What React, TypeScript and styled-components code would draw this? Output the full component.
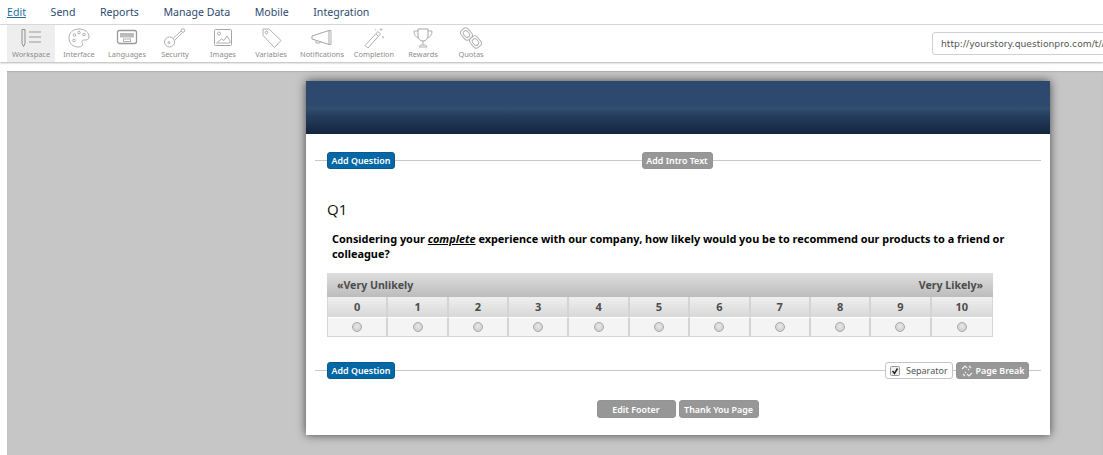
import React from 'react';
import styled, { createGlobalStyle } from 'styled-components';

const GlobalStyle = createGlobalStyle`
  html, body {
    margin: 0;
    height: 100%;
    overflow: hidden;
    background: #fff;
  }
`;

const NavBar = styled.nav`
  display: flex;
  align-items: center;
  gap: 24.6px;
  height: 23px;
  padding: 0 0 1px 7px;
  border-bottom: 1px solid #dcdcdc;
  font-family: 'Noto Sans', sans-serif;
  font-size: 10.6px;
  color: #2d4a70;
`;

const NavLink = styled.span<{ $active?: boolean }>`
  color: ${(p) => (p.$active ? '#1d6f9f' : '#2d4a70')};
  text-decoration: ${(p) => (p.$active ? 'underline' : 'none')};
`;

const Toolbar = styled.div`
  display: flex;
  justify-content: space-between;
  align-items: center;
  height: 37px;
  padding-left: 7px;
  box-shadow: 0 1px 2px rgba(0, 0, 0, 0.3);
`;

const Tools = styled.div`
  display: flex;
  height: 100%;
`;

const Tool = styled.div<{ $active?: boolean; $width?: number }>`
  display: flex;
  flex-direction: column;
  align-items: center;
  width: ${(p) => p.$width ?? 48}px;
  height: 100%;
  padding-top: 2px;
  box-sizing: border-box;
  background: ${(p) => (p.$active ? '#eeeeee' : 'transparent')};
  font-family: 'Noto Sans', sans-serif;
  font-size: 7.4px;
  line-height: 10px;
  color: #8d8d8d;
  white-space: nowrap;
`;

const Icon = styled.svg`
  width: 24px;
  height: 22px;
  fill: none;
  stroke: #b0b0b0;
  stroke-width: 1;
`;

const UrlField = styled.div`
  flex: none;
  width: 190px;
  margin-right: -19px;
  height: 23px;
  box-sizing: border-box;
  padding-left: 8px;
  border: 1px solid #cfcfcf;
  border-radius: 3px;
  font-family: 'DejaVu Sans', sans-serif;
  font-size: 9.2px;
  line-height: 21px;
  color: #555;
  white-space: nowrap;
  overflow: hidden;
`;

const Canvas = styled.main`
  margin: 9px 0 0 7px;
  padding: 10px 53px 20px 299px;
  background: #c6c6c6;
  box-shadow: inset 0 1px 1px rgba(0, 0, 0, 0.12);
`;

const Card = styled.section`
  width: 744px;
  background: #fff;
  box-shadow: 0 0 9px rgba(0, 0, 0, 0.65);
  font-family: 'Noto Sans', sans-serif;
`;

const Banner = styled.div`
  height: 53px;
  background: linear-gradient(
    #2c486c 0,
    #2e4a6e 49%,
    #31506f 50%,
    #253e5e 65%,
    #14253f 100%
  );
`;

const Body = styled.div`
  padding: 18px 9px 17px;
`;

const ActionRow = styled.div<{ $top?: number }>`
  display: flex;
  justify-content: space-between;
  align-items: center;
  height: 17px;
  margin-top: ${(p) => p.$top ?? 0}px;
  padding: 0 12px;
  background: linear-gradient(#c8c8c8, #c8c8c8) center / 100% 1px no-repeat;
`;

const CenterSlot = styled.div`
  flex: 1;
  display: flex;
  justify-content: center;
  padding-right: 70px;
`;

const Button = styled.button<{ $tone?: 'blue' | 'gray'; $width: number; $height?: number }>`
  flex: none;
  display: inline-flex;
  justify-content: center;
  align-items: center;
  gap: 3px;
  width: ${(p) => p.$width}px;
  height: ${(p) => p.$height ?? 17}px;
  padding: 0;
  border: 1px solid ${(p) => (p.$tone === 'blue' ? '#0a5a8e' : '#949494')};
  border-radius: 3px;
  background: ${(p) => (p.$tone === 'blue' ? '#0568a6' : '#979797')};
  color: #fff;
  font-family: 'Noto Sans', sans-serif;
  font-size: 8.9px;
  font-weight: 600;
  white-space: nowrap;
`;

const RightGroup = styled.div`
  display: flex;
  gap: 3px;
`;

const SeparatorBox = styled.label`
  display: inline-flex;
  align-items: center;
  gap: 6px;
  width: 68px;
  height: 17px;
  box-sizing: border-box;
  padding-left: 4px;
  background: #fff;
  border: 1px solid #c4c4c4;
  border-radius: 3px;
  font-family: 'Noto Sans', sans-serif;
  font-size: 9px;
  color: #555;
`;

const Tick = styled.svg`
  width: 10px;
  height: 10px;
`;

const QuestionNumber = styled.h2`
  margin: 29px 0 0 12px;
  font-family: 'Open Sans', sans-serif;
  font-size: 15px;
  line-height: 22px;
  font-weight: 500;
  color: #111;
`;

const QuestionText = styled.p`
  margin: 11px 0 0 17px;
  width: 690px;
  font-size: 10.9px;
  line-height: 15px;
  font-weight: 700;
  color: #000;
`;

const Emphasis = styled.em`
  text-decoration: underline;
`;

const Scale = styled.div`
  width: 666px;
  margin: 12px 0 0 12px;
`;

const ScaleHeader = styled.div`
  display: flex;
  justify-content: space-between;
  align-items: center;
  height: 24px;
  padding: 0 10px;
  background: linear-gradient(#dedede, #bcbcbc);
  font-family: 'Noto Sans', sans-serif;
  font-size: 10.6px;
  font-weight: 700;
  color: #4c4c4c;
`;

const ScaleGrid = styled.div`
  display: grid;
  grid-template-columns: repeat(11, 1fr);
  border: 1px solid #d6d6d6;
  border-top: 0;
`;

const NumberCell = styled.div`
  height: 20px;
  background: linear-gradient(#efefef, #d8d8d8);
  border-right: 2px solid #d4d4d4;
  border-bottom: 1px solid #fff;
  font-size: 11px;
  font-weight: 700;
  line-height: 20px;
  text-align: center;
  color: #4c4c4c;

  &:nth-child(11) {
    border-right: 0;
  }
`;

const RadioCell = styled.div`
  display: flex;
  justify-content: center;
  align-items: center;
  height: 18px;
  background: #f4f4f4;
  border-right: 2px solid #d4d4d4;

  &:last-child {
    border-right: 0;
  }
`;

const Radio = styled.span`
  width: 8px;
  height: 8px;
  border: 1px solid #a8a8a8;
  border-radius: 50%;
  background: radial-gradient(circle at 50% 40%, #e8e8e8, #c8c8c8);
`;

const FooterRow = styled.div`
  display: flex;
  justify-content: center;
  gap: 3px;
  margin-top: 21px;
  padding-right: 1px;
`;

const navItems = ['Send', 'Reports', 'Manage Data', 'Mobile', 'Integration'];
const scalePoints = [0, 1, 2, 3, 4, 5, 6, 7, 8, 9, 10];

const toolIcons: Record<string, React.ReactNode> = {
  Workspace: (
    <>
      <path d="M3 2.500h3v14l-1.500 3-1.500-3z" stroke="#8f8f8f" />
      <path d="M10 5h12M10 10h12M10 15h12" stroke="#999" />
    </>
  ),
  Interface: (
    <>
      <path d="M12 2c6 0 10 3.500 10 8 0 3-3 3-5 3-2.500 0-2 2-1.500 3.500.5 2-1 3.500-4 3.500-5.500 0-9.500-3.500-9.500-9S6 2 12 2z" />
      <circle cx="7.500" cy="8" r="1.300" />
      <circle cx="12" cy="5.500" r="1.300" />
      <circle cx="17" cy="7.500" r="1.300" />
      <circle cx="7" cy="13.500" r="1.300" />
    </>
  ),
  Languages: (
    <>
      <rect x="2.500" y="3.500" width="19" height="13" rx="2" stroke="#999" strokeWidth="1.300" />
      <rect x="5" y="6" width="14" height="4.500" fill="#bbb" stroke="none" />
      <rect x="8.500" y="12" width="7" height="2.500" />
    </>
  ),
  Security: (
    <>
      <circle cx="6.500" cy="15" r="5" />
      <circle cx="6" cy="15.500" r="1" />
      <path d="M10 11.500L18 4M11.500 13.500L19.500 5.500" />
      <circle cx="20" cy="3.500" r="1.800" />
    </>
  ),
  Images: (
    <>
      <rect x="3.500" y="2.500" width="17" height="16" rx="1" stroke="#a5a5a5" />
      <path d="M5.500 16l5-4 2.500 1.500 3-4.500 3 5v2z" />
      <circle cx="8" cy="6.500" r="1.500" />
    </>
  ),
  Variables: (
    <>
      <path d="M4 2h6l12 11.500-6.500 7L4 8.500z" />
      <circle cx="7.500" cy="5.500" r="1.300" />
    </>
  ),
  Notifications: (
    <>
      <path d="M2 9l17-5.500v14L2 12z" stroke="#a5a5a5" />
      <path d="M19 3.500h2v14h-2M6 13v3h4v-2" />
    </>
  ),
  Completion: (
    <>
      <path d="M3 18.500L16 4.500l2.500 2.500L6 21z" />
      <path d="M14 7l2.500 2.500" />
      <path d="M19 1v3M17.500 2.500h3M21 9v2.500M20 10h2M13 2l1 1.500" stroke="#c0c0c0" />
    </>
  ),
  Rewards: (
    <>
      <path d="M7 2h10v6c0 3.500-2 6-5 6s-5-2.500-5-6z" stroke="#a5a5a5" />
      <path d="M7 4H3c0 4 1.500 6 5 7M17 4h4c0 4-1.500 6-5 7M12 14v4M8 20h8l-1.500-2h-5z" />
    </>
  ),
  Quotas: (
    <>
      <rect x="3" y="1" width="9" height="12" rx="3.500" transform="rotate(-40 7.500 7)" />
      <rect x="5" y="3.500" width="5" height="7" rx="2" transform="rotate(-40 7.500 7)" />
      <rect x="12" y="9" width="9" height="12" rx="3.500" transform="rotate(-40 16.500 15)" />
      <rect x="14" y="11.500" width="5" height="7" rx="2" transform="rotate(-40 16.500 15)" />
    </>
  ),
};

const tools: { label: string; width?: number }[] = [
  { label: 'Workspace' },
  { label: 'Interface' },
  { label: 'Languages' },
  { label: 'Security' },
  { label: 'Images' },
  { label: 'Variables' },
  { label: 'Notifications', width: 54 },
  { label: 'Completion', width: 50 },
  { label: 'Rewards' },
  { label: 'Quotas' },
];

const App: React.FC = () => {
  return (
    <>
      <GlobalStyle />
      <NavBar>
        <NavLink $active>Edit</NavLink>
        {navItems.map((item) => (
          <NavLink key={item}>{item}</NavLink>
        ))}
      </NavBar>
      <Toolbar>
        <Tools>
          {tools.map((tool, index) => (
            <Tool key={tool.label} $active={index === 0} $width={tool.width}>
              <Icon viewBox="0 0 24 22">{toolIcons[tool.label]}</Icon>
              {tool.label}
            </Tool>
          ))}
        </Tools>
        <UrlField>http://yourstory.questionpro.com/t/A</UrlField>
      </Toolbar>
      <Canvas>
        <Card>
          <Banner />
          <Body>
            <ActionRow>
              <Button $tone="blue" $width={68}>Add Question</Button>
              <CenterSlot>
                <Button $tone="gray" $width={71}>Add Intro Text</Button>
              </CenterSlot>
            </ActionRow>
            <QuestionNumber>Q1</QuestionNumber>
            <QuestionText>
              Considering your <Emphasis>complete</Emphasis> experience with our company, how likely
              would you be to recommend our products to a friend or colleague?
            </QuestionText>
            <Scale>
              <ScaleHeader>
                <span>«Very Unlikely</span>
                <span>Very Likely»</span>
              </ScaleHeader>
              <ScaleGrid>
                {scalePoints.map((n) => (
                  <NumberCell key={n}>{n}</NumberCell>
                ))}
                {scalePoints.map((n) => (
                  <RadioCell key={n}>
                    <Radio />
                  </RadioCell>
                ))}
              </ScaleGrid>
            </Scale>
            <ActionRow $top={25}>
              <Button $tone="blue" $width={68}>Add Question</Button>
              <RightGroup>
                <SeparatorBox>
                  <Tick viewBox="0 0 10 10">
                    <rect x="0.500" y="0.500" width="9" height="9" rx="1" fill="#eee" stroke="#999" />
                    <path d="M2.500 5l2 2.500 3-5" fill="none" stroke="#222" strokeWidth="1.500" />
                  </Tick>
                  Separator
                </SeparatorBox>
                <Button $tone="gray" $width={73}>
                  <svg width="12" height="12" viewBox="0 0 12 12" fill="none" stroke="#eee" strokeWidth="1.200">
                    <path d="M1 4l3-3 2 2M11 8l-3 3-2-2M2 9l2 2M8 1l2 2M7 5l1-1M4 8l1-1" />
                  </svg>
                  Page Break
                </Button>
              </RightGroup>
            </ActionRow>
            <FooterRow>
              <Button $tone="gray" $width={79} $height={18}>Edit Footer</Button>
              <Button $tone="gray" $width={80} $height={18}>Thank You Page</Button>
            </FooterRow>
          </Body>
        </Card>
      </Canvas>
    </>
  );
};

export default App;
